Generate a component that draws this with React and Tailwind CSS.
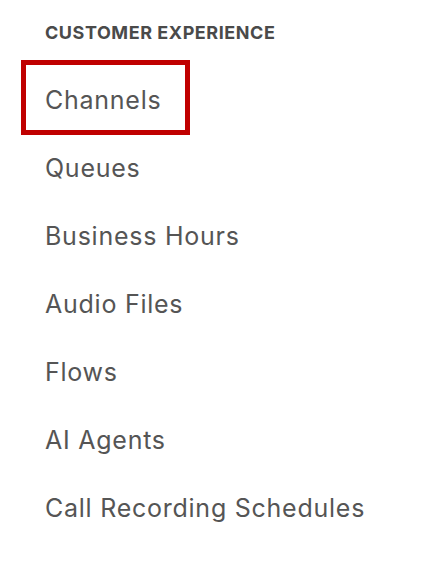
export default function App() {
  const items = ["Queues", "Business Hours", "Audio Files", "Flows", "AI Agents", "Call Recording Schedules"];
  return (
    <div className="w-[428px] h-[561px] bg-white" style={{ fontFamily: "Inter, 'Liberation Sans', sans-serif" }}>
      <div className="pt-[22px] pl-[45px] text-[18px] font-bold tracking-[0.55px] text-[#4a4a4a] leading-[22px]">CUSTOMER EXPERIENCE</div>
      <div className="mt-[16px] ml-[21px] w-[169px] h-[75px] border-[5px] border-[#c00000] flex items-center pt-[7px] pl-[19px] text-[25px] tracking-[0.75px] text-[#555555]">Channels</div>
      <div className="flex flex-col">
        {items.map((t) => (
          <div key={t} className="pl-[45px] h-[68px] flex items-center text-[25px] tracking-[0.75px] text-[#555555]">{t}</div>
        ))}
      </div>
    </div>
  );
}
